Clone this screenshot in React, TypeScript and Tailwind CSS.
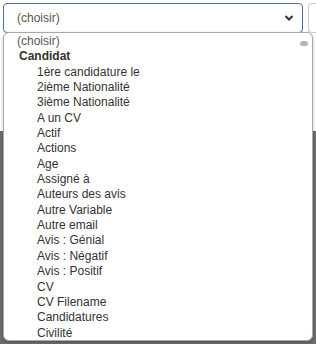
import React from "react";

const items = [
  "1ère candidature le",
  "2ième Nationalité",
  "3ième Nationalité",
  "A un CV",
  "Actif",
  "Actions",
  "Age",
  "Assigné à",
  "Auteurs des avis",
  "Autre Variable",
  "Autre email",
  "Avis : Génial",
  "Avis : Négatif",
  "Avis : Positif",
  "CV",
  "CV Filename",
  "Candidatures",
  "Civilité",
];

export default function App() {
  return (
    <div
      className="relative w-[316px] h-[344px] overflow-hidden bg-white"
      style={{ fontFamily: '"Liberation Sans", Arial, sans-serif' }}
    >
      {/* page behind */}
      <div className="flex flex-col h-full">
        <div className="h-[143px] bg-white pt-[3px] pl-[3px] flex gap-[5px]">
          <div className="w-[300px] h-[30px] rounded-[4px] border border-[#4f7096] flex items-center justify-between pl-[13px] pr-[8px] text-[12px] text-[#555]">
            <span>(choisir)</span>
            <svg width="10" height="8" viewBox="0 0 10 8">
              <path d="M1.5 2 L5 5.5 L8.5 2" fill="none" stroke="#333" strokeWidth="2" />
            </svg>
          </div>
          <div className="flex-1 h-[30px] rounded-l-[4px] border border-r-0 border-[#ccc]" />
        </div>
        <div className="flex-1 bg-[#6b6b6b] flex justify-center pt-[193px]">
          <span className="text-[16px] leading-[20px] font-bold text-black tracking-[2px]">SIZE DE BLOC</span>
        </div>
      </div>

      {/* dropdown list */}
      <div className="absolute left-[3px] top-[32px] w-[310px] h-[309px] rounded-[6px] border border-[#a9a9a9] bg-white shadow-[0_1px_3px_rgba(0,0,0,0.25)] overflow-hidden">
        <div className="absolute right-[4px] top-[8px] w-[8px] h-[5px] rounded-full bg-[#a7b9c1]" />
        <div className="pt-[1px] text-[12px] leading-[15.35px] text-[#333]">
          <div className="pl-[13px] text-[#555]">(choisir)</div>
          <div className="pl-[15px] font-bold">Candidat</div>
          {items.map((t) => (
            <div key={t} className="pl-[33px]">
              {t}
            </div>
          ))}
        </div>
      </div>
    </div>
  );
}
